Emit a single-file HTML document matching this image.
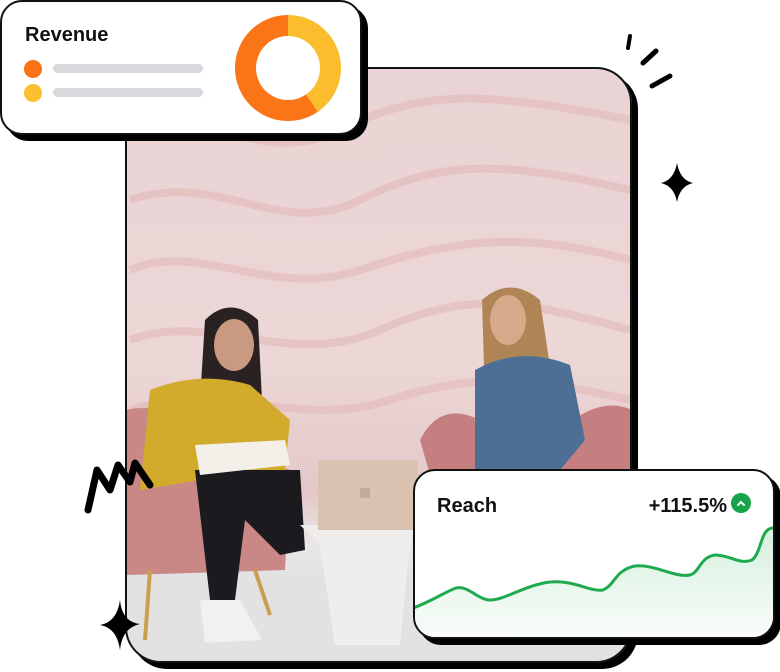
<!DOCTYPE html>
<html><head><style>
body{margin:0;width:780px;height:672px;background:#fff;position:relative;overflow:hidden;font-family:"Liberation Sans",sans-serif}
.card{position:absolute;background:#fff;border:2px solid #111;box-shadow:6px 6px 0 #000;box-sizing:border-box}
</style></head><body>
<!-- photo -->
<div style="position:absolute;left:125px;top:67px;width:507px;height:596px;border:2px solid #111;border-radius:36px;box-shadow:6px 6px 0 #000;overflow:hidden;box-sizing:border-box;background:linear-gradient(#e9d3d4 0%,#ecd6d6 50%,#e4c8c8 72%,#e9e7e6 80%,#dcdad8 100%)">
<svg width="507" height="596" viewBox="125 67 507 596" style="position:absolute;left:-2px;top:-2px">
<g fill="none" stroke="#e3b9b8" stroke-width="8" opacity=".6">
<path d="M130 130 C200 100 260 170 340 130 S480 90 630 120"/>
<path d="M130 200 C220 170 280 240 360 200 S500 160 630 190"/>
<path d="M130 270 C200 240 270 300 360 270 S520 230 630 260"/>
<path d="M130 340 C210 310 290 370 380 330 S520 300 630 330"/>
<path d="M130 410 C220 380 300 430 390 400 S540 380 630 400"/>
</g>
<rect x="125" y="570" width="510" height="100" fill="#e3e2e2"/>
<!-- chairs -->
<path d="M125 410 Q170 400 200 440 L290 470 L285 570 L125 575Z" fill="#c98786"/>
<path d="M420 440 Q440 400 480 420 L560 430 Q600 395 632 410 L632 470 L430 475Z" fill="#c67f80"/>
<line x1="150" y1="570" x2="145" y2="640" stroke="#c9a050" stroke-width="4"/>
<line x1="255" y1="570" x2="270" y2="615" stroke="#c9a050" stroke-width="4"/>
<!-- left woman -->
<path d="M205 320 Q230 295 258 320 L262 400 L200 400Z" fill="#2a2222"/>
<ellipse cx="234" cy="345" rx="20" ry="26" fill="#c99a80"/>
<path d="M150 390 Q200 370 250 385 L290 420 L285 470 L200 480 L140 490 Z" fill="#d2aa2c"/>
<path d="M195 470 L300 470 L305 550 L280 555 L245 520 L235 600 L210 600 Z" fill="#1b1b1f"/>
<path d="M200 600 L240 600 L262 640 L205 643Z" fill="#f1f1f1"/>
<path d="M195 445 L285 440 L290 465 L200 475Z" fill="#f3f0ea"/>
<!-- right woman -->
<path d="M482 300 Q510 275 540 300 L555 400 L485 400Z" fill="#b08556"/>
<ellipse cx="508" cy="320" rx="18" ry="25" fill="#d7a88a"/>
<path d="M475 370 Q520 345 570 365 L585 440 L560 470 L475 470 Z" fill="#4d6f95"/>
<!-- table & laptop -->
<path d="M300 525 L415 525 L410 545 L400 645 L335 645 L320 545Z" fill="#efeeec"/>
<rect x="318" y="460" width="100" height="70" fill="#d9c2b0"/>
<rect x="360" y="488" width="10" height="10" fill="#c4aa98"/>
</svg>
</div>
<!-- decorations -->
<svg width="780" height="672" style="position:absolute;left:0;top:0">
<g stroke="#000" stroke-linecap="round" fill="none">
<line x1="630" y1="36" x2="628" y2="48" stroke-width="4"/>
<line x1="643" y1="63" x2="656" y2="51" stroke-width="5"/>
<line x1="652" y1="86" x2="670" y2="76" stroke-width="5"/>
<path d="M88 510 L97 470 L110 490 L118 465 L130 482 L135 463 L150 485" stroke-width="7" stroke-linejoin="round"/>
</g>
<path d="M677 163 Q680 180 693 183 Q680 186 677 202 Q674 186 661 183 Q674 180 677 163Z" fill="#000"/>
<path d="M120 600 Q122 622 140 624 Q122 628 120 650 Q117 628 100 625 Q117 622 120 600Z" fill="#000"/>
</svg>
<!-- revenue -->
<div class="card" style="left:0;top:0;width:362px;height:135px;border-radius:22px">
<div style="position:absolute;left:23px;top:22px;font-size:20px;font-weight:bold;color:#111">Revenue</div>
<div style="position:absolute;left:22px;top:58px;width:18px;height:18px;border-radius:50%;background:#f97316"></div>
<div style="position:absolute;left:22px;top:82px;width:18px;height:18px;border-radius:50%;background:#fbbf2f"></div>
<div style="position:absolute;left:51px;top:62px;width:150px;height:9px;border-radius:5px;background:#d9d9dd"></div>
<div style="position:absolute;left:51px;top:86px;width:150px;height:9px;border-radius:5px;background:#d9d9dd"></div>
<div style="position:absolute;left:233px;top:13px;width:106px;height:106px;border-radius:50%;background:conic-gradient(#fbbc2e 0 146deg,#f97518 146deg 360deg)"></div>
<div style="position:absolute;left:254px;top:34px;width:64px;height:64px;border-radius:50%;background:#fff"></div>
</div>
<!-- reach -->
<div class="card" style="left:413px;top:469px;width:362px;height:170px;border-radius:22px;overflow:hidden">
<div style="position:absolute;left:22px;top:24px;font-size:20px;font-weight:bold;color:#111">Reach</div>
<div style="position:absolute;right:46px;top:24px;font-size:20px;font-weight:bold;color:#111">+115.5%</div>
<div style="position:absolute;left:316px;top:22px;width:20px;height:20px;border-radius:50%;background:#16a34a"></div>
<svg style="position:absolute;left:320px;top:26px" width="12" height="12"><path d="M3 8 L6 5 L9 8" stroke="#fff" stroke-width="2" fill="none" stroke-linecap="round"/></svg>
<svg width="362" height="170" viewBox="413 469 362 170" style="position:absolute;left:-2px;top:-2px">
<defs><linearGradient id="g" x1="0" y1="0" x2="0" y2="1"><stop offset="0" stop-color="#d6f0de"/><stop offset="1" stop-color="#fafdfb"/></linearGradient></defs>
<path d="M413 608 C430 602 445 592 456 588 C468 585 478 600 490 600 C505 600 525 585 550 582 C575 580 590 592 603 590 C615 585 615 570 635 566 C655 564 675 578 690 575 C700 572 700 557 715 555 C730 555 740 565 752 560 C762 552 760 530 772 528 L775 528 L775 640 L413 640Z" fill="url(#g)"/>
<path d="M413 608 C430 602 445 592 456 588 C468 585 478 600 490 600 C505 600 525 585 550 582 C575 580 590 592 603 590 C615 585 615 570 635 566 C655 564 675 578 690 575 C700 572 700 557 715 555 C730 555 740 565 752 560 C762 552 760 530 772 528 L775 528" fill="none" stroke="#1faa4f" stroke-width="3"/>
</svg>
</div>
</body></html>
